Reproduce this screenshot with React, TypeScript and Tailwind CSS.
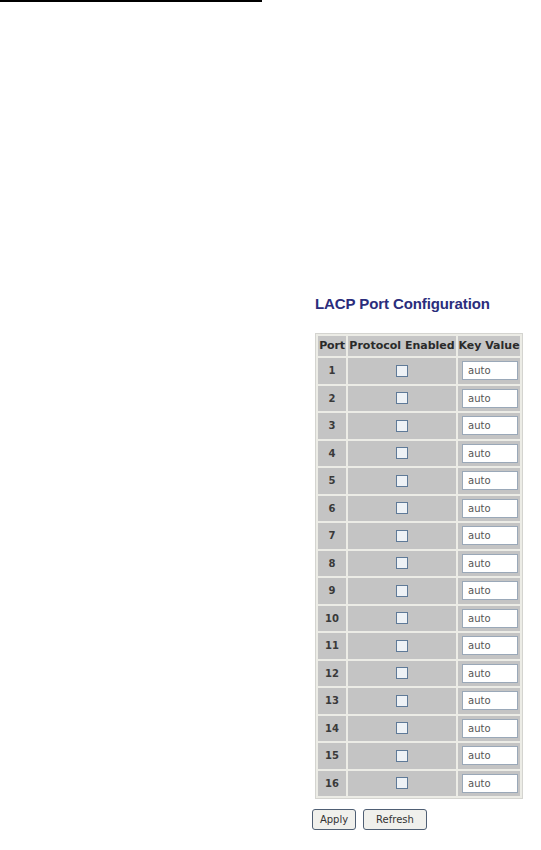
const ports = Array.from({ length: 16 }, (_, i) => i + 1);

export default function App() {
  return (
    <div className="min-h-[850px] bg-white font-['Liberation_Sans',Arial,sans-serif]">
      <div className="h-[2px] w-[262px] bg-black" />

      <div className="pl-[315px] pt-[294px]">
        <h1 className="text-[15px] leading-[16px] font-bold tracking-[-0.1px] text-[#2b2d7c]">
          LACP Port Configuration
        </h1>

        <table className="mt-[21px] w-[208px] table-fixed border-separate border-spacing-[2px] border border-[#d4d4d0] bg-[#ecece6] font-['DejaVu_Sans',Verdana,sans-serif] text-[10px]">
          <colgroup>
            <col className="w-[28px]" />
            <col className="w-[108px]" />
            <col className="w-[62px]" />
          </colgroup>
          <thead>
            <tr className="h-[20px]">
              <th className="bg-[#c6c6c6] p-0 text-[11px] font-bold tracking-[-0.2px] text-[#2a2a2a]">Port</th>
              <th className="bg-[#c6c6c6] p-0 text-[11px] font-bold whitespace-nowrap text-[#2a2a2a]">Protocol Enabled</th>
              <th className="bg-[#c6c6c6] p-0 text-[11px] font-bold whitespace-nowrap text-[#2a2a2a]">Key Value</th>
            </tr>
          </thead>
          <tbody>
            {ports.map((p) => (
              <tr key={p} className="h-[25.5px]">
                <td className="bg-[#c4c4c4] p-0 text-center font-bold text-[#3a3a3a]">{p}</td>
                <td className="bg-[#c4c4c4] p-0">
                  <div className="flex justify-center">
                    <span className="block h-[12px] w-[12px] border border-[#5f7a98] bg-[#eef2f6]" />
                  </div>
                </td>
                <td className="bg-[#c4c4c4] p-0">
                  <div className="flex pl-[4px]">
                    <div className="flex h-[19px] w-[56px] items-center border border-[#9aa8b8] bg-white pl-[5px] text-[10px] text-[#555]">
                      auto
                    </div>
                  </div>
                </td>
              </tr>
            ))}
          </tbody>
        </table>

        <div className="-ml-[3px] mt-[10px] flex gap-[7px] font-['DejaVu_Sans',Verdana,sans-serif] text-[10px] text-[#333]">
          <button className="h-[21px] w-[44px] rounded-[3px] border border-[#4f5f74] bg-[#f0f0ec]">Apply</button>
          <button className="h-[21px] w-[64px] rounded-[3px] border border-[#4f5f74] bg-[#f0f0ec]">Refresh</button>
        </div>
      </div>
    </div>
  );
}
